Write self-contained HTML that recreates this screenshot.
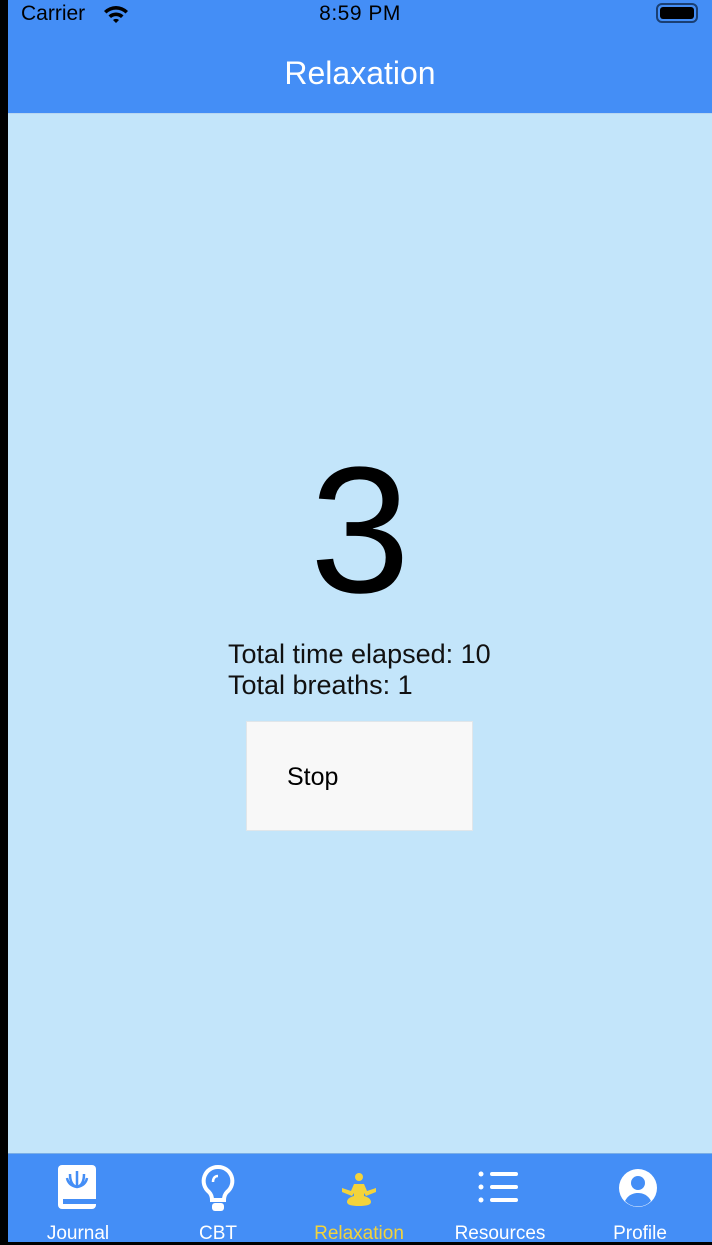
<!DOCTYPE html>
<html><head><style>
*{margin:0;padding:0;box-sizing:border-box}
body{width:712px;height:1242px;overflow:hidden;background:#000;font-family:"Liberation Sans",sans-serif;position:relative}
.app{position:absolute;left:8px;top:0;width:704px;height:1242px;background:#c3e5fa}
.top{position:absolute;left:0;top:0;width:704px;height:114px;background:#448ef6;border-bottom:1px solid #b9d6f0}
.abs{position:absolute}
.tab{position:absolute;left:0;top:1153px;width:704px;height:89px;background:#448ef6;border-top:1px solid #7aaee6}
.lbl{position:absolute;top:1223px;font-size:19px;color:#fff;text-align:center;width:140px}
</style></head><body>
<div class="app">
<div class="top">
<div class="abs" style="left:13px;top:2px;font-size:21px;color:#000">Carrier</div>
<svg class="abs" style="left:94px;top:3px" width="28" height="22" viewBox="0 0 28 22"><path d="M2 8a17 17 0 0 1 24 0l-2.5 2.5a13.5 13.5 0 0 0-19 0z M6.5 12.5a11 11 0 0 1 15 0L19 15a7.5 7.5 0 0 0-10 0z M11 17a4.5 4.5 0 0 1 6 0l-3 3z" fill="#000"/></svg>
<div class="abs" style="left:0;width:704px;top:2px;text-align:center;font-size:21px;color:#000;letter-spacing:0.5px">8:59 PM</div>
<div class="abs" style="left:648px;top:3px;width:42px;height:20px;border:2px solid #1a3f73;border-radius:6px;padding:2px"><div style="background:#000;width:100%;height:100%;border-radius:3px"></div></div>
<div class="abs" style="left:0;width:704px;top:55px;text-align:center;font-size:32px;color:#fff">Relaxation</div>
</div>
<div class="abs" style="left:0;width:704px;top:421px;text-align:center;font-size:180px;line-height:220px;color:#000">3</div>
<div class="abs" style="left:220px;top:639px;font-size:27px;line-height:31px;color:#111">Total time elapsed: 10<br>Total breaths: 1</div>
<div class="abs" style="left:238px;top:721px;width:227px;height:110px;background:#f8f8f8;border:1px solid #e0e6ea"><div style="position:absolute;left:40px;top:41px;font-size:25px">Stop</div></div>
<div class="tab">
<svg class="abs" style="left:49px;top:10px" width="42" height="48" viewBox="0 0 42 48"><rect x="1" y="1" width="38" height="44" rx="4" fill="#fff"/><rect x="6" y="35" width="33" height="5" fill="#448ef6"/><path d="M20 7v16M13 10c0 8 3 12 7 13c4-1 7-5 7-13M10 14c1 5 4 8 10 9c6-1 9-4 10-9" stroke="#448ef6" stroke-width="2.5" fill="none"/></svg>
<svg class="abs" style="left:192px;top:10px" width="36" height="50" viewBox="0 0 36 50"><path d="M18 3a14 14 0 0 0-9 25c2 2 3 5 3 8h12c0-3 1-6 3-8a14 14 0 0 0-9-25z" stroke="#fff" stroke-width="4" fill="none"/><path d="M13 18c0-4 2-6 5-6" stroke="#fff" stroke-width="2.5" fill="none"/><rect x="12" y="39" width="12" height="8" rx="3" fill="#fff"/></svg>
<svg class="abs" style="left:332px;top:19px" width="38" height="34" viewBox="0 0 38 34"><circle cx="19" cy="4" r="4" fill="#f3d33b"/><path d="M14 11h10l3 7 9-3v4l-10 4-2-3v3c4 1 7 3 7 6c0 3-5 4-12 4s-12-1-12-4c0-3 3-5 7-6v-3l-2 3-10-4v-4l9 3z" fill="#f3d33b"/></svg>
<svg class="abs" style="left:470px;top:16px" width="42" height="34" viewBox="0 0 42 34"><circle cx="3" cy="4" r="2.5" fill="#fff"/><circle cx="3" cy="17" r="2.5" fill="#fff"/><circle cx="3" cy="30" r="2.5" fill="#fff"/><rect x="12" y="2" width="28" height="4" rx="2" fill="#fff"/><rect x="12" y="15" width="28" height="4" rx="2" fill="#fff"/><rect x="12" y="28" width="28" height="4" rx="2" fill="#fff"/></svg>
<svg class="abs" style="left:610px;top:14px" width="40" height="40" viewBox="0 0 40 40"><circle cx="20" cy="20" r="19" fill="#fff"/><circle cx="20" cy="15" r="7" fill="#448ef6"/><path d="M7 33c3-6 8-8 13-8s10 2 13 8a18 18 0 0 1-26 0z" fill="#448ef6"/></svg>
</div>
<div class="lbl" style="left:0">Journal</div>
<div class="lbl" style="left:140px">CBT</div>
<div class="lbl" style="left:281px;color:#f3d33b">Relaxation</div>
<div class="lbl" style="left:422px">Resources</div>
<div class="lbl" style="left:562px">Profile</div>
</div>
</body></html>
